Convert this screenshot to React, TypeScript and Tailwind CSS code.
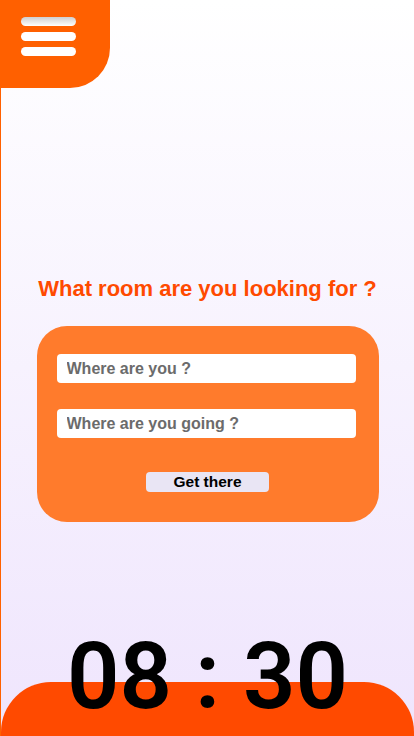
import React from 'react';

const App: React.FC = () => {
  return (
    <div className="h-[736px] w-full overflow-hidden flex flex-col border-l border-[#ff6000] bg-gradient-to-b from-white to-[#efe5fd] font-['Liberation_Sans',Arial,sans-serif]">
      {/* Menu corner */}
      <div className="h-[88px] w-[109px] shrink-0 bg-[#ff6000] rounded-br-[40px] flex flex-col gap-[6px] pt-[17px] pl-[20px]">
        <span className="block h-[9px] w-[55px] rounded-full bg-gradient-to-b from-[#cfcfcf] to-white"></span>
        <span className="block h-[9px] w-[55px] rounded-full bg-white"></span>
        <span className="block h-[9px] w-[55px] rounded-full bg-white"></span>
      </div>

      {/* Search */}
      <h1 className="mt-[187px] text-center text-[22px] leading-[28px] font-bold text-[#ff4a00]">
        What room are you looking for ?
      </h1>

      <div className="mt-[23px] mx-auto w-[342px] rounded-[30px] bg-[#ff7b2c] pt-[28px] pb-[30px] px-5 flex flex-col">
        <input
          className="h-[29px] w-[299px] rounded-[4px] bg-white px-[10px] text-[16px] font-bold text-[#555] placeholder:text-[#6b6b6b] outline-none"
          placeholder="Where are you ?"
        />
        <input
          className="mt-[26px] h-[29px] w-[299px] rounded-[4px] bg-white px-[10px] text-[16px] font-bold text-[#555] placeholder:text-[#6b6b6b] outline-none"
          placeholder="Where are you going ?"
        />
        <button className="mt-[34px] mx-auto h-[20px] w-[123px] rounded-[4px] bg-[#e9e5f4] text-[15.5px] leading-[20px] font-bold text-black">
          Get there
        </button>
      </div>

      {/* Clock */}
      <div className="mt-auto flex flex-col">
        <div className="relative z-10 mb-[-41px] text-center text-[92px] leading-none font-semibold text-black font-['Roboto',sans-serif]">
          08 : 30
        </div>
        <div className="h-[54px] rounded-t-[50px] bg-[#ff4a00]"></div>
      </div>
    </div>
  );
};

export default App;
